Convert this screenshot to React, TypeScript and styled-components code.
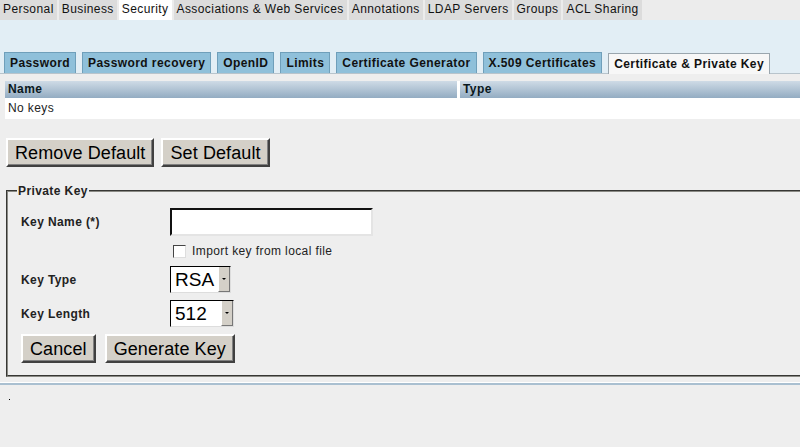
import React from "react";
import styled, { createGlobalStyle } from "styled-components";

const Global = createGlobalStyle`
  html, body { margin: 0; padding: 0; background: #eeeeee; }
  body { font-family: "Liberation Sans", Arial, sans-serif; font-size: 12px; color: #000; overflow: hidden; }
`;

const Page = styled.div`
  width: 800px;
  height: 447px;
  background: #eeeeee;
  overflow: hidden;
`;

const TopBar = styled.div`
  display: flex;
  height: 20px;
  background: #ececec;
  gap: 2px;
`;

const TopTab = styled.div<{ $active?: boolean }>`
  height: 20px;
  line-height: 19px;
  padding: 0 3px;
  font-size: 12px;
  letter-spacing: 0.42px;
  color: #111;
  background: ${(p) => (p.$active ? "#ffffff" : "#dcdcdc")};
  white-space: nowrap;
`;

const Band = styled.div`
  background: #e2eef5;
  padding: 32px 0 0 4px;
  display: flex;
  gap: 6px;
  align-items: flex-end;
  border-bottom: 1px solid #b8c4cc;
`;

const SubTab = styled.div<{ $active?: boolean }>`
  height: 20px;
  line-height: 20px;
  padding: 0 5px;
  font-weight: bold;
  font-size: 12px;
  letter-spacing: 0.42px;
  color: #111;
  background: ${(p) => (p.$active ? "#f7f7f7" : "#8fc0da")};
  border: 1px solid ${(p) => (p.$active ? "#9aa6ae" : "#6f9fba")};
  border-bottom: none;
  white-space: nowrap;
  margin-bottom: ${(p) => (p.$active ? "-1px" : "0")};
  position: relative;
`;

const Content = styled.div`
  padding: 7px 0 0 5px;
`;

const Table = styled.div`
  width: 795px;
`;

const HeadRow = styled.div`
  display: grid;
  grid-template-columns: 452px 1fr;
  column-gap: 3px;
  height: 17px;
  background: #ffffff;
`;

const HeadCell = styled.div`
  background: linear-gradient(#cfdbe6, #93acc2);
  font-weight: bold;
  font-size: 12px;
  letter-spacing: 0.4px;
  line-height: 17px;
  padding-left: 3px;
  color: #0a1820;
`;

const BodyRow = styled.div`
  height: 21px;
  line-height: 20px;
  background: #ffffff;
  padding-left: 3px;
  font-size: 12px;
  letter-spacing: 0.4px;
  color: #222;
`;

const BigButton = styled.button`
  font-family: "Liberation Sans", Arial, sans-serif;
  font-size: 18px;
  letter-spacing: 0.1px;
  color: #000;
  background: #d4d0c8;
  border: 2px solid;
  border-color: #ffffff #404040 #404040 #ffffff;
  box-shadow: inset -1px -1px 0 #808080;
  height: 29px;
  padding: 0 7px;
  margin: 0;
  line-height: 24px;
`;

const ButtonRow = styled.div<{ $gap: number }>`
  display: flex;
  gap: ${(p) => p.$gap}px;
`;

const TopButtons = styled(ButtonRow)`
  margin: 19px 0 0 1px;
`;

const Fieldset = styled.fieldset`
  margin: 17px -20px 0 1px;
  padding: 10px 0 12px 13px;
  border: 2px groove #8a8a84;
`;

const Legend = styled.legend`
  font-weight: bold;
  font-size: 12px;
  letter-spacing: 0.4px;
  color: #222;
  padding: 0 1px;
  margin-left: -4px;
`;

const FormGrid = styled.div`
  display: grid;
  grid-template-columns: 149px auto;
  align-items: center;
  row-gap: 7px;
  justify-content: start;
`;

const Label = styled.div`
  font-weight: bold;
  font-size: 12px;
  letter-spacing: 0.4px;
  color: #222;
`;

const TextInput = styled.input`
  width: 199px;
  height: 24px;
  box-sizing: content-box;
  padding: 0;
  margin: 0;
  border: 2px inset #999;
  border-color: #666 #e4e4e4 #e4e4e4 #666;
  background: #fff;
`;

const CheckLine = styled.label`
  display: flex;
  align-items: center;
  gap: 6px;
  height: 16px;
  font-size: 12px;
  letter-spacing: 0.4px;
  color: #222;
  margin-left: 3px;
`;

const Box = styled.span`
  width: 11px;
  height: 11px;
  border: 1px solid;
  border-color: #444 #ddd #ddd #444;
  background: #fff;
  display: inline-block;
`;

const Select = styled.div<{ $w: number }>`
  display: flex;
  width: ${(p) => p.$w}px;
  height: 27px;
  box-sizing: border-box;
  border: 1px solid;
  border-color: #000 #ddd #ddd #000;
  background: #fff;
`;

const SelectValue = styled.div`
  flex: 1;
  font-size: 19px;
  line-height: 25px;
  padding-left: 4px;
  color: #000;
`;

const Arrow = styled.div`
  width: 10px;
  background: #d4d0c8;
  border-left: 1px solid #fff;
  border-right: 1px solid #777;
  border-bottom: 1px solid #777;
  display: flex;
  align-items: center;
  justify-content: center;
  &::after {
    content: "";
    border-left: 2px solid transparent;
    border-right: 2px solid transparent;
    border-top: 2px solid #000;
  }
`;

const FormButtons = styled(ButtonRow)`
  margin: 7px 0 0 0;
`;

const Footer = styled.div`
  margin-top: 5px;
  height: 2px;
  border-top: 1px solid #fff;
  background: #a9bfd0;
`;

const Dot = styled.div`
  width: 1px;
  height: 1px;
  background: #000;
  margin: 14px 0 0 9px;
`;

const topTabs = ["Personal", "Business", "Security", "Associations & Web Services", "Annotations", "LDAP Servers", "Groups", "ACL Sharing"];
const subTabs = ["Password", "Password recovery", "OpenID", "Limits", "Certificate Generator", "X.509 Certificates", "Certificate & Private Key"];

export default function App() {
  return (
    <Page>
      <Global />
      <TopBar>
        {topTabs.map((t) => (
          <TopTab key={t} $active={t === "Security"}>{t}</TopTab>
        ))}
      </TopBar>
      <Band>
        {subTabs.map((t) => (
          <SubTab key={t} $active={t === "Certificate & Private Key"}>{t}</SubTab>
        ))}
      </Band>
      <Content>
        <Table>
          <HeadRow>
            <HeadCell>Name</HeadCell>
            <HeadCell>Type</HeadCell>
          </HeadRow>
          <BodyRow>No keys</BodyRow>
        </Table>
        <TopButtons $gap={7}>
          <BigButton>Remove Default</BigButton>
          <BigButton>Set Default</BigButton>
        </TopButtons>
        <Fieldset>
          <Legend>Private Key</Legend>
          <FormGrid>
            <Label>Key Name (*)</Label>
            <TextInput />
            <div />
            <CheckLine><Box />Import key from local file</CheckLine>
            <Label>Key Type</Label>
            <Select $w={61}><SelectValue>RSA</SelectValue><Arrow /></Select>
            <Label>Key Length</Label>
            <Select $w={64}><SelectValue>512</SelectValue><Arrow /></Select>
          </FormGrid>
          <FormButtons $gap={9}>
            <BigButton>Cancel</BigButton>
            <BigButton>Generate Key</BigButton>
          </FormButtons>
        </Fieldset>
      </Content>
      <Footer />
      <Dot />
    </Page>
  );
}
